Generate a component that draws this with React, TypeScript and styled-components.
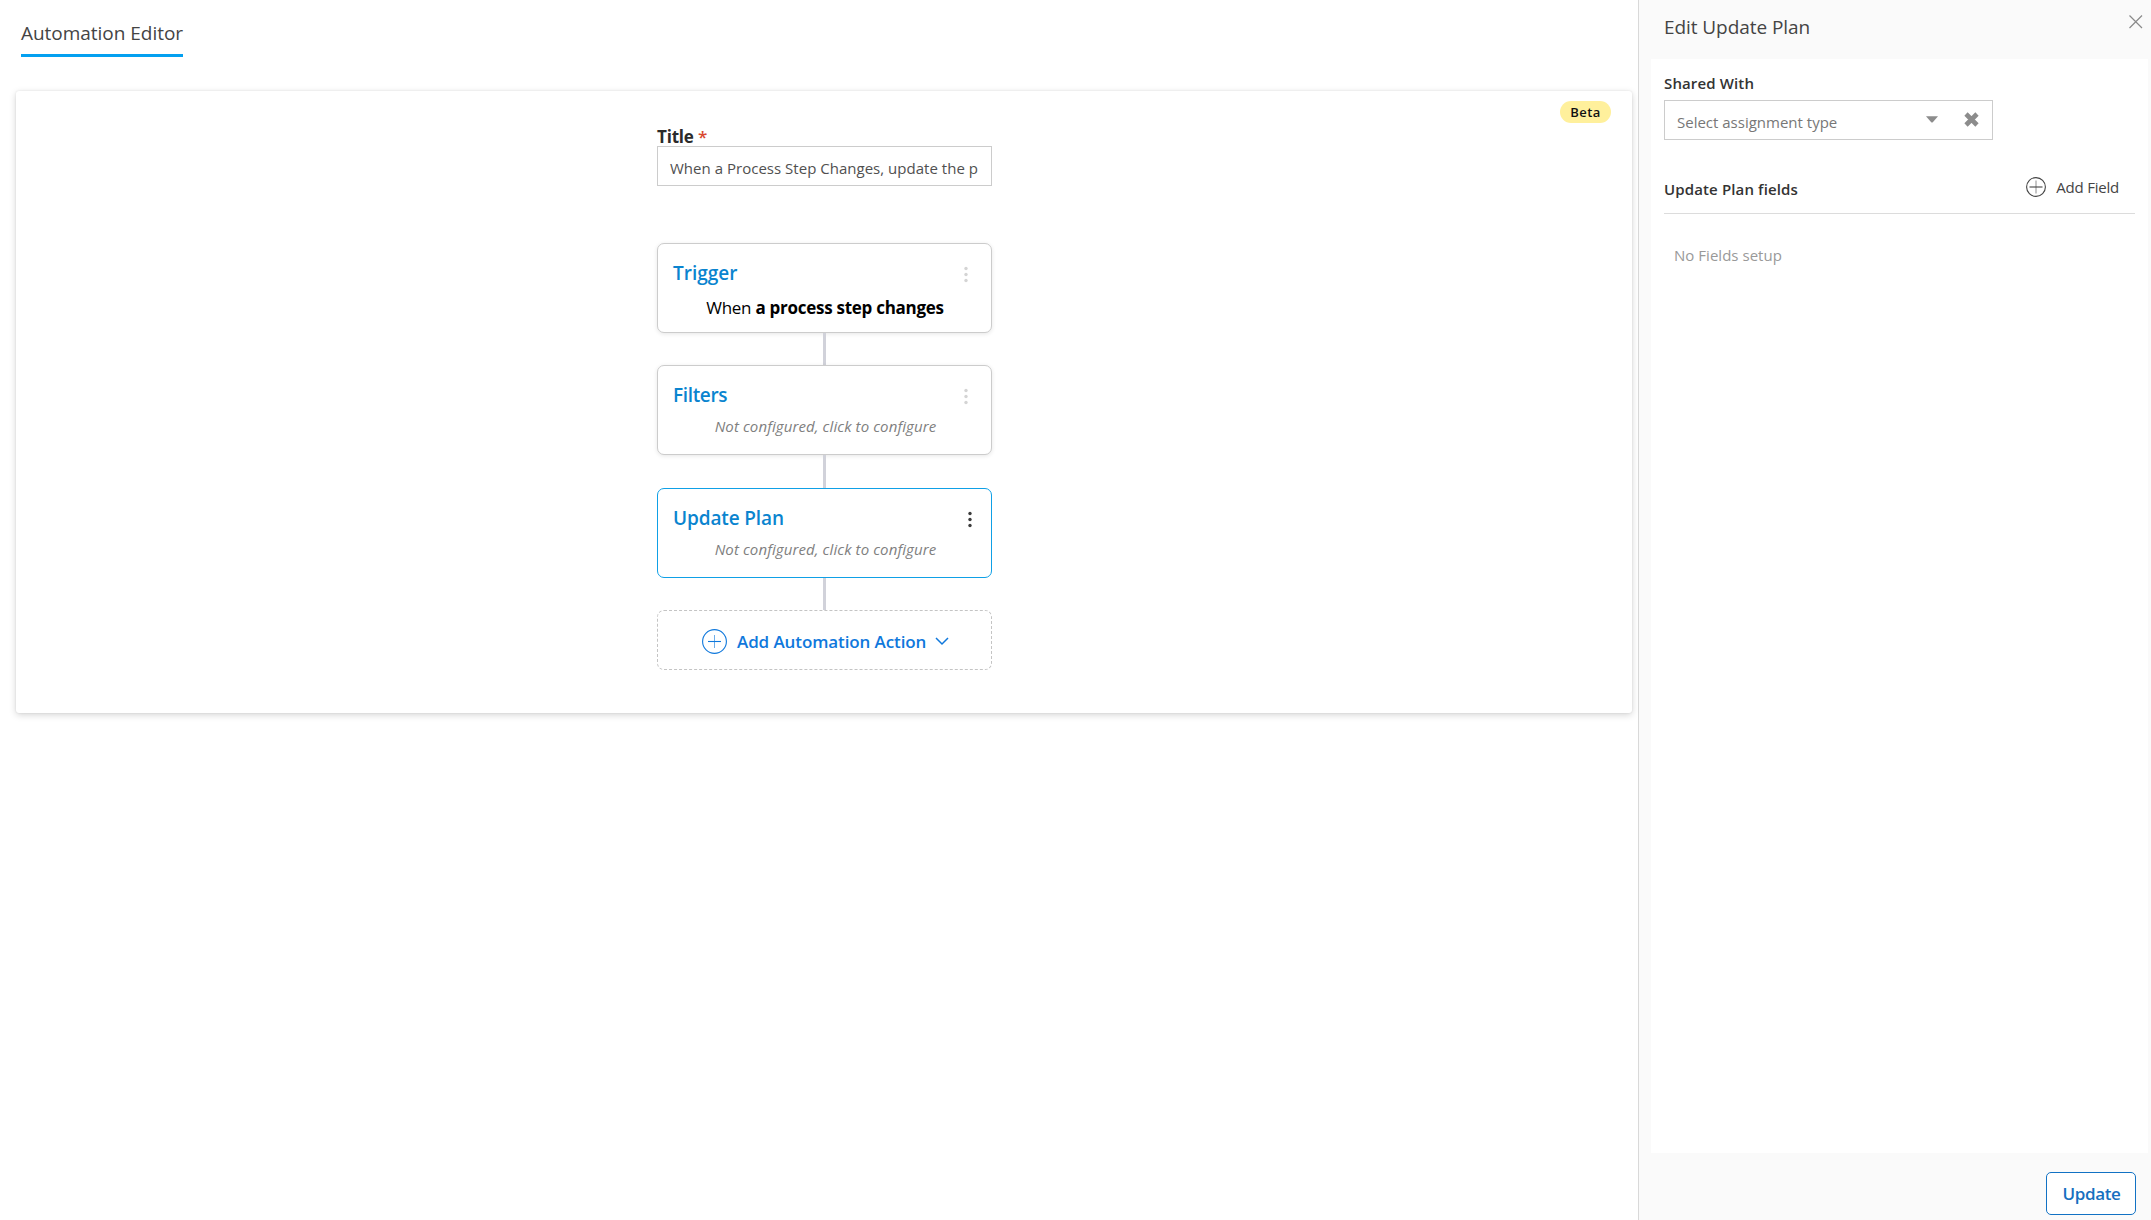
import React from "react";
import styled, { createGlobalStyle } from "styled-components";

const GlobalStyle = createGlobalStyle`
  *, *::before, *::after { box-sizing: border-box; }
  html, body { margin: 0; padding: 0; background: #fff; }
  body {
    font-family: "Open Sans", "Noto Sans", sans-serif;
    color: #333;
    overflow: hidden;
  }
  svg { display: block; flex: none; }
`;

const Page = styled.div`
  display: flex;
  width: 100%;
  height: 100vh;
`;

const Main = styled.main`
  flex: 1;
  min-width: 0;
  padding: 19px 6px 0 16px;
`;

const Tab = styled.h1`
  width: 162px;
  margin: 0 0 34px 5px;
  padding-bottom: 7px;
  border-bottom: 3px solid #03a0f0;
  font-size: 19px;
  font-weight: 400;
  line-height: 28px;
  letter-spacing: -0.03px;
  color: #444;
  white-space: nowrap;
`;

const Canvas = styled.section`
  position: relative;
  display: flex;
  justify-content: center;
  height: 622px;
  padding: 33px 0 0 1px;
  border-radius: 3px;
  background: #fff;
  box-shadow: 0 2px 7px 0 rgba(0, 0, 0, 0.17), 0 0 2px rgba(0, 0, 0, 0.1);
`;

const Badge = styled.span`
  position: absolute;
  top: 10px;
  right: 21px;
  width: 51px;
  height: 22px;
  border-radius: 11px;
  background: #fff09c;
  color: #111;
  font-size: 13px;
  font-weight: 600;
  line-height: 22px;
  letter-spacing: 0.4px;
  text-align: center;
`;

const Flow = styled.div`
  display: flex;
  flex-direction: column;
  align-items: center;
  width: 335px;
`;

const TitleLabel = styled.label`
  align-self: flex-start;
  height: 22px;
  font-size: 17px;
  font-weight: 700;
  line-height: 25px;
  letter-spacing: -0.2px;
  color: #2b2b2b;
`;

const Required = styled.span`
  color: #d9482f;
  font-weight: 600;
`;

const TitleBox = styled.div`
  width: 335px;
  height: 40px;
  margin-bottom: 57px;
  padding: 5px 12px 0 12px;
  border: 1px solid #ccc;
`;

const TitleValue = styled.div`
  font-size: 15px;
  line-height: 32px;
  letter-spacing: 0.02px;
  color: #505050;
  white-space: nowrap;
`;

const Node = styled.div<{ $active?: boolean }>`
  width: 335px;
  height: 90px;
  padding: 16px ${(p) => (p.$active ? 19 : 23)}px 0 15px;
  border: 1px solid ${(p) => (p.$active ? "#0fa0e6" : "#ccc")};
  border-radius: 7px;
  background: #fff;
  box-shadow: ${(p) => (p.$active ? "none" : "0 1px 4px rgba(0, 0, 0, 0.1)")};
`;

const NodeHead = styled.div`
  display: flex;
  justify-content: space-between;
  height: 27px;
`;

const NodeTitle = styled.h2<{ $spacing: number }>`
  margin: 0;
  font-size: 19px;
  font-weight: 600;
  line-height: 27px;
  letter-spacing: ${(p) => p.$spacing}px;
  color: #0a84cf;
  white-space: nowrap;
`;

const Dots = styled.svg`
  margin-top: 6px;
`;

const NodeRule = styled.p`
  margin: 9px 0 0 9px;
  font-size: 17px;
  line-height: 24px;
  letter-spacing: -0.27px;
  text-align: center;
  color: #000;
  white-space: nowrap;
`;

const NodeHint = styled.p<{ $active?: boolean }>`
  margin: 5px ${(p) => (p.$active ? 0 : -4)}px 0 6px;
  font-size: 15px;
  font-style: italic;
  line-height: 24px;
  letter-spacing: 0.1px;
  text-align: center;
  color: #808080;
  white-space: nowrap;
`;

const Connector = styled.div<{ $length: number }>`
  width: 3px;
  height: ${(p) => p.$length}px;
  background: #d1d2da;
`;

const AddAction = styled.button`
  display: flex;
  align-items: center;
  width: 335px;
  height: 60px;
  padding: 3px 0 0 44px;
  border: 1px dashed #c4c4c4;
  border-radius: 7px;
  background: #fff;
  color: #0f78dc;
  font-family: inherit;
  font-size: 17px;
  font-weight: 600;
  line-height: 24px;
  letter-spacing: -0.1px;
  white-space: nowrap;
`;

const AddActionText = styled.span`
  width: 189px;
  margin: 0 9px 0 10px;
  padding-top: 1px;
  text-align: left;
`;

const Panel = styled.aside`
  display: flex;
  flex-direction: column;
  width: 513px;
  border-left: 1px solid #d9d9d9;
  background: #fafafa;
`;

const PanelHead = styled.header`
  display: flex;
  justify-content: space-between;
  align-items: flex-start;
  height: 59px;
  padding: 13px 8px 0 25px;
`;

const PanelTitle = styled.h2`
  margin: 0;
  font-size: 19px;
  font-weight: 400;
  line-height: 28px;
  letter-spacing: -0.07px;
  color: #444;
`;

const PanelBody = styled.div`
  flex: 1;
  margin: 0 3px 0 12px;
  padding: 12px 13px 0;
  background: #fff;
`;

const FieldLabel = styled.div`
  font-size: 15px;
  font-weight: 600;
  line-height: 24px;
  letter-spacing: 0.13px;
  color: #333;
  white-space: nowrap;
`;

const Select = styled.div`
  display: flex;
  align-items: center;
  width: 329px;
  height: 40px;
  margin: 5px 0 37px;
  padding: 0 13px 2px 12px;
  border: 1px solid #ccc;
`;

const Placeholder = styled.span`
  flex: 1;
  padding-top: 5px;
  font-size: 15px;
  line-height: 24px;
  letter-spacing: 0;
  color: #777;
`;

const Caret = styled.svg`
  margin-right: 26px;
`;

const FieldsHead = styled.div`
  display: flex;
  justify-content: space-between;
  align-items: flex-start;
  height: 37px;
  border-bottom: 1px solid #dcdcdc;
  padding-right: 16px;
`;

const AddField = styled.button`
  display: flex;
  align-items: center;
  gap: 10px;
  height: 22px;
  margin-top: -1px;
  padding: 0;
  border: 0;
  background: none;
  color: #444;
  font-family: inherit;
  font-size: 15px;
  line-height: 24px;
  letter-spacing: -0.22px;
`;

const Empty = styled.p`
  margin: 29px 0 0 10px;
  font-size: 15px;
  line-height: 24px;
  letter-spacing: 0.03px;
  color: #999;
`;

const PanelFoot = styled.footer`
  display: flex;
  justify-content: flex-end;
  height: 67px;
  padding: 19px 15px 0 0;
`;

const UpdateButton = styled.button`
  width: 90px;
  height: 43px;
  padding: 0 0 0 1px;
  border: 1px solid #1272c4;
  border-radius: 5px;
  background: #fff;
  color: #1670c0;
  font-family: inherit;
  font-size: 17px;
  font-weight: 600;
  letter-spacing: -0.35px;
`;

const Kebab = ({ color }: { color: string }) => (
  <Dots width="4" height="17" viewBox="0 0 4 17" fill={color}>
    <circle cx="2" cy="2.5" r="1.7" />
    <circle cx="2" cy="8.5" r="1.7" />
    <circle cx="2" cy="14.5" r="1.7" />
  </Dots>
);

const CirclePlus = ({ size, arm }: { size: number; arm: number }) => {
  const c = size / 2;
  return (
    <svg width={size} height={size} viewBox={`0 0 ${size} ${size}`} fill="none" stroke="currentColor">
      <circle cx={c} cy={c} r={c - 0.6} strokeWidth="1.1" />
      <path d={`M${c - arm} ${c}H${c + arm}`} strokeWidth="1.1" />
      <path d={`M${c} ${c - arm}V${c + arm}`} strokeWidth="1" opacity="0.6" />
    </svg>
  );
};

export default function App() {
  return (
    <>
      <GlobalStyle />
      <Page>
        <Main>
          <Tab>Automation Editor</Tab>
          <Canvas>
            <Badge>Beta</Badge>
            <Flow>
              <TitleLabel>
                Title <Required>*</Required>
              </TitleLabel>
              <TitleBox>
                <TitleValue>When a Process Step Changes, update the p</TitleValue>
              </TitleBox>

              <Node>
                <NodeHead>
                  <NodeTitle $spacing={0}>Trigger</NodeTitle>
                  <Kebab color="#d4d4d4" />
                </NodeHead>
                <NodeRule>
                  When <b>a process step changes</b>
                </NodeRule>
              </Node>
              <Connector $length={32} />
              <Node>
                <NodeHead>
                  <NodeTitle $spacing={-0.35}>Filters</NodeTitle>
                  <Kebab color="#d4d4d4" />
                </NodeHead>
                <NodeHint>Not configured, click to configure</NodeHint>
              </Node>
              <Connector $length={33} />
              <Node $active>
                <NodeHead>
                  <NodeTitle $spacing={-0.13}>Update Plan</NodeTitle>
                  <Kebab color="#3c3c3c" />
                </NodeHead>
                <NodeHint $active>Not configured, click to configure</NodeHint>
              </Node>
              <Connector $length={32} />
              <AddAction>
                <CirclePlus size={25} arm={6.5} />
                <AddActionText>Add Automation Action</AddActionText>
                <svg width="14" height="9" viewBox="0 0 14 9" fill="none" stroke="currentColor" strokeWidth="1.5">
                  <path d="M1 1l6 6 6-6" />
                </svg>
              </AddAction>
            </Flow>
          </Canvas>
        </Main>

        <Panel>
          <PanelHead>
            <PanelTitle>Edit Update Plan</PanelTitle>
            <svg width="15" height="17" viewBox="0 0 15 17" fill="none" stroke="#8a8a8a" strokeWidth="1.2">
              <path d="M1.5 2.5l12.500 12.500M14 2.500L1.500 15" />
            </svg>
          </PanelHead>
          <PanelBody>
            <FieldLabel>Shared With</FieldLabel>
            <Select>
              <Placeholder>Select assignment type</Placeholder>
              <Caret width="12" height="7" viewBox="0 0 12 7" fill="#8c8c8c">
                <path d="M0 0.200H12L7 6Q6 7 5 6Z" />
              </Caret>
              <svg width="15" height="15" viewBox="0 0 15 15" stroke="#8c8c8c" strokeWidth="4.600">
                <path d="M2 2l11 11M13 2L2 13" />
              </svg>
            </Select>
            <FieldsHead>
              <FieldLabel>Update Plan fields</FieldLabel>
              <AddField>
                <CirclePlus size={20} arm={6.5} />
                Add Field
              </AddField>
            </FieldsHead>
            <Empty>No Fields setup</Empty>
          </PanelBody>
          <PanelFoot>
            <UpdateButton>Update</UpdateButton>
          </PanelFoot>
        </Panel>
      </Page>
    </>
  );
}
